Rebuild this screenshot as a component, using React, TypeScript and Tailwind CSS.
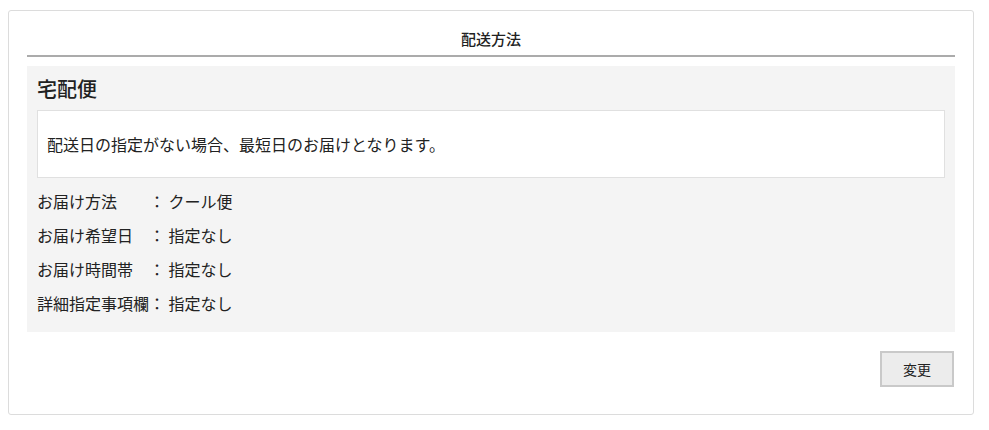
const ROWS = [
  { label: "お届け方法　　", value: "クール便" },
  { label: "お届け希望日　", value: "指定なし" },
  { label: "お届け時間帯　", value: "指定なし" },
  { label: "詳細指定事項欄", value: "指定なし" },
];

export default function App() {
  return (
    <div
      className="min-h-[430px] bg-white pt-[10px] pl-[8px] text-[#222]"
      style={{ fontFamily: '"Noto Sans CJK JP", "Noto Sans", sans-serif' }}
    >
      <div className="w-[966px] rounded-[3px] border border-[#dcdcdc] px-[18px] pb-[27px]">
        <div className="flex h-[46px] items-start justify-center border-b-2 border-[#ababab] pt-[18px] text-[15px] leading-[20px] font-medium">
          配送方法
        </div>

        <div className="mt-[9px] bg-[#f4f4f4] px-[10px] pt-[11px] pb-[12px]">
          <h2 className="text-[20px] leading-[24px] font-medium">宅配便</h2>
          <div className="mt-[9px] flex h-[68px] items-center border border-[#e0e0e0] bg-white px-[9px] text-[16px]">
            配送日の指定がない場合、最短日のお届けとなります。
          </div>
          <div className="mt-[6px]">
            {ROWS.map((row) => (
              <div key={row.label} className="text-[16px] leading-[34px]">
                {row.label}： {row.value}
              </div>
            ))}
          </div>
        </div>

        <div className="mt-[19px] flex justify-end pr-px">
          <button className="h-[36px] w-[74px] border-2 border-[#c9c9c9] bg-[#ececec] text-[14px] text-[#222]">
            変更
          </button>
        </div>
      </div>
    </div>
  );
}
